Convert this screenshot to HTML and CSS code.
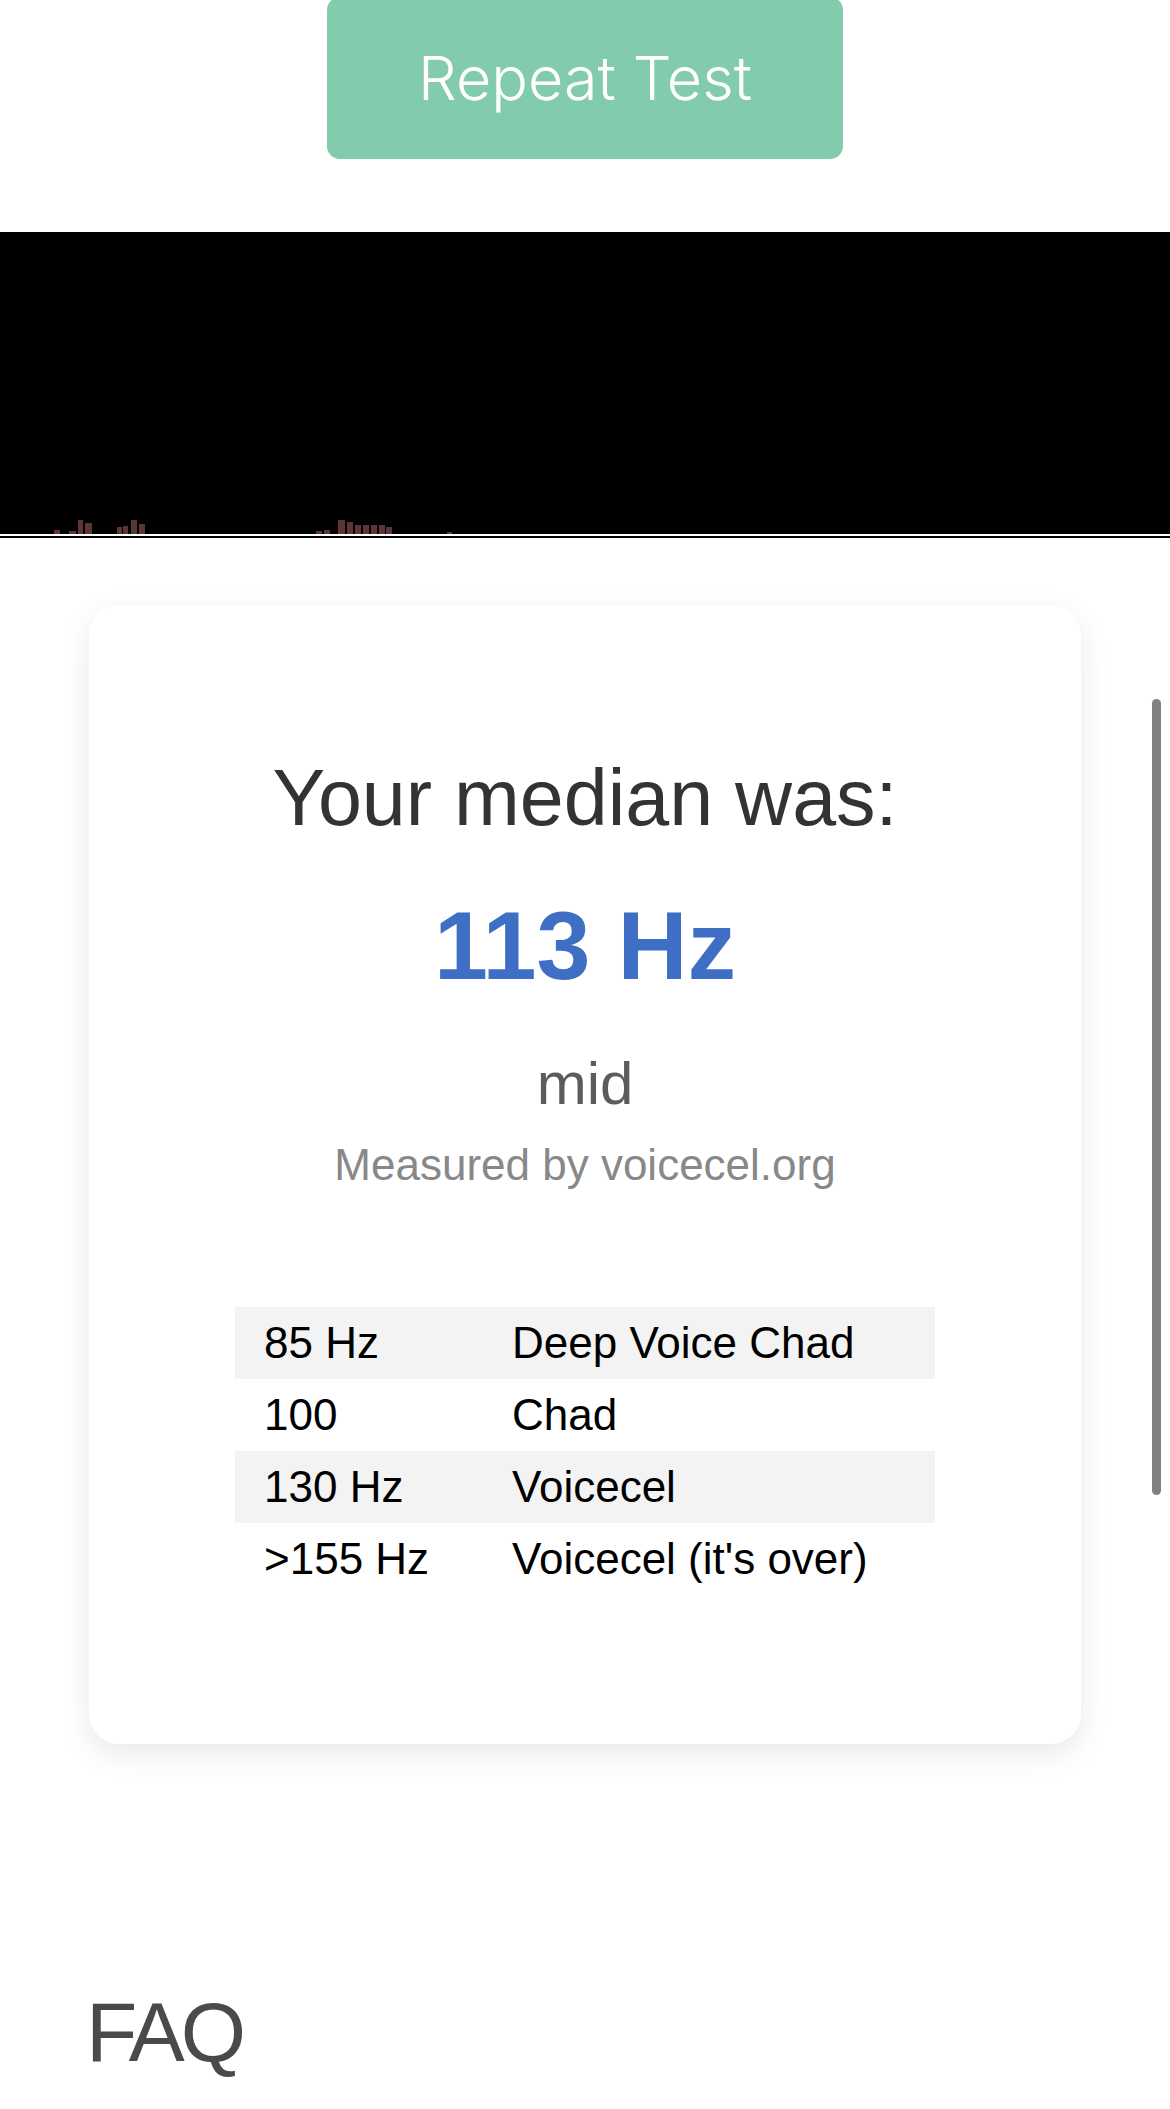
FILE: index.html
```html
<!DOCTYPE html>
<html lang="en">
<head>
<meta charset="utf-8">
<title>Voice pitch result</title>
<link rel="stylesheet" href="styles.css">
</head>
<body>
<div class="page">
  <div class="actions">
    <button class="repeat-btn">Repeat Test</button>
  </div>

  <div class="visualizer">
    <svg class="spectrum" viewBox="0 0 1170 306" preserveAspectRatio="none" aria-hidden="true">
      <g fill="#5b3537">
        <rect x="54" y="298" width="6" height="4"/>
        <rect x="69" y="299" width="7" height="3"/>
        <rect x="78" y="288" width="5" height="14"/>
        <rect x="85" y="291" width="7" height="11"/>
        <rect x="117" y="295" width="5" height="7"/>
        <rect x="123" y="294" width="5" height="8"/>
        <rect x="131" y="288" width="6" height="14"/>
        <rect x="139" y="292" width="6" height="10"/>
        <rect x="316" y="299" width="6" height="3"/>
        <rect x="324" y="298" width="6" height="4"/>
        <rect x="338" y="288" width="7" height="14"/>
        <rect x="347" y="290" width="6" height="12"/>
        <rect x="355" y="293" width="6" height="9"/>
        <rect x="363" y="293" width="6" height="9"/>
        <rect x="371" y="293" width="6" height="9"/>
        <rect x="379" y="293" width="6" height="9"/>
        <rect x="386" y="295" width="6" height="7"/>
        <rect x="447" y="300" width="5" height="2"/>
      </g>
      <rect x="0" y="302" width="1170" height="2" fill="#ffffff"/>
    </svg>
  </div>

  <section class="result-card">
    <h2 class="result-title">Your median was:</h2>
    <div class="result-value">113 Hz</div>
    <div class="result-label">mid</div>
    <div class="result-credit">Measured by voicecel.org</div>

    <table class="scale">
      <tbody>
        <tr><td class="col-hz">85 Hz</td><td>Deep Voice Chad</td></tr>
        <tr><td class="col-hz">100</td><td>Chad</td></tr>
        <tr><td class="col-hz">130 Hz</td><td>Voicecel</td></tr>
        <tr><td class="col-hz">&gt;155 Hz</td><td>Voicecel (it's over)</td></tr>
      </tbody>
    </table>
  </section>

  <h2 class="faq-title">FAQ</h2>
  <div class="faq-rule"></div>
</div>
<div class="scroll-indicator"></div>
</body>
</html>
```

FILE: styles.css
```css
html, body {
  margin: 0;
  padding: 0;
  background: #ffffff;
}

body {
  position: relative;
  font-family: "Liberation Sans", Arial, Helvetica, sans-serif;
  overflow: hidden;
  height: 2109px;
}

.page {
  margin-top: -3px;
  display: flex;
  flex-direction: column;
}

.actions {
  display: flex;
  justify-content: center;
}

.repeat-btn {
  width: 516px;
  height: 162px;
  border: none;
  border-radius: 13px;
  background: #82cbad;
  color: #ffffff;
  font-family: Inter, "Noto Sans", sans-serif;
  font-weight: 350;
  font-size: 61px;
  display: flex;
  align-items: center;
  justify-content: center;
  padding: 0;
}

.visualizer {
  margin-top: 73px;
  height: 306px;
  background: #000000;
}

.spectrum {
  display: block;
  width: 100%;
  height: 100%;
}

.result-card {
  margin: 67px 89px 0 89px;
  padding: 148px 0 149px 0;
  background: #ffffff;
  border-radius: 30px;
  box-shadow: 0 10px 30px rgba(0, 0, 0, 0.09);
  display: flex;
  flex-direction: column;
  align-items: center;
  text-align: center;
}

.result-title {
  margin: 0;
  font-weight: 400;
  font-size: 79px;
  line-height: 1.15;
  color: #333333;
}

.result-value {
  margin-top: 46px;
  font-weight: 700;
  font-size: 97px;
  line-height: 1.15;
  color: #3e6fc4;
}

.result-label {
  margin-top: 48px;
  font-size: 60px;
  line-height: 1.15;
  color: #5c5c5c;
}

.result-credit {
  margin-top: 22px;
  font-size: 44px;
  line-height: 1.15;
  color: #888888;
}

.scale {
  margin-top: 116px;
  width: 700px;
  border-collapse: collapse;
  text-align: left;
  font-size: 44px;
  color: #000000;
}

.scale td {
  height: 72px;
  line-height: 72px;
  padding: 0 0 0 29px;
  white-space: nowrap;
}

.scale .col-hz {
  width: 219px;
}

.scale tr:nth-child(odd) {
  background: #f3f3f3;
}

.faq-title {
  margin: 240px 0 0 86px;
  font-weight: 400;
  font-size: 84px;
  line-height: 1.15;
  letter-spacing: -4px;
  color: #4a4a4a;
}

.faq-rule {
  margin-top: 28px;
  height: 2px;
  background: #999999;
}

.scroll-indicator {
  position: absolute;
  top: 699px;
  right: 9px;
  width: 9px;
  height: 796px;
  border-radius: 5px;
  background: #808080;
}
```
